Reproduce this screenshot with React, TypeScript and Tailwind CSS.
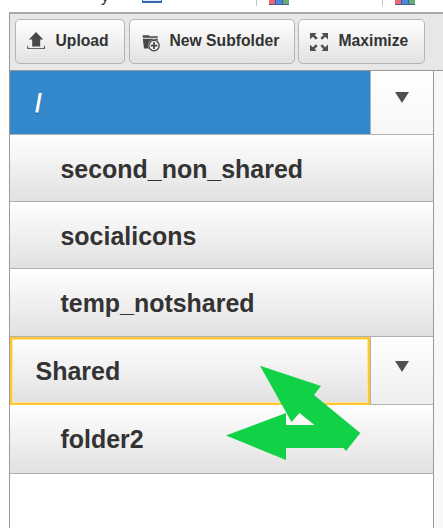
import type { ReactNode } from "react";

const rowBg = "bg-gradient-to-b from-white to-[#e1e1e1]";

function UploadIcon() {
  return (
    <svg width="20" height="20" viewBox="0 0 20 20" className="-mt-px shrink-0">
      <path d="M10 1 17.3 8.6H14.2V15.5H6.2V8.6H2.9Z" fill="#484848" />
      <path d="M1.7 14.8v2.7h16.8v-2.7" fill="none" stroke="#666" strokeWidth="1.1" />
    </svg>
  );
}

function NewFolderIcon() {
  return (
    <svg width="20" height="20" viewBox="0 0 20 20" className="shrink-0">
      <path d="M2.8 3.2h6l1 1h8v1.6h-15ZM2.8 6.8h15v9.7H4Z" fill="#484848" />
      <circle cx="14" cy="13.6" r="6" fill="#f1f1f1" />
      <circle cx="14" cy="13.6" r="5.2" fill="#f1f1f1" stroke="#484848" strokeWidth="1.3" />
      <path d="M14 10.3v6.6M10.7 13.6h6.6" stroke="#484848" strokeWidth="1.8" />
    </svg>
  );
}

function MaximizeIcon() {
  return (
    <svg width="20" height="20" viewBox="0 0 20 20" className="shrink-0" fill="#505050">
      <path d="M1 1h6.6L5.7 3l3 3-1.8 1.8-3.1-3L1 7.5Z" />
      <path d="M19 1v6.5L16.2 4.8l-3 3L11.4 6l3-3L12.5 1Z" />
      <path d="M1 19v-6.5l2.8 2.7 3.1-3L8.7 14l-3 3 1.9 2Z" />
      <path d="M19 19h-6.5l1.9-2-3-3 1.8-1.8 3 3 2.8-2.7Z" />
    </svg>
  );
}

function ChartIcon() {
  return (
    <div className="flex h-[5px] w-5 border-b border-[#45608f]">
      <div className="w-[6px] bg-[#f0666c]" />
      <div className="w-[8px] border-x border-[#3558b8] bg-[#4a86e0]" />
      <div className="w-[6px] bg-[#64ae70]" />
    </div>
  );
}

function ToolButton({ icon, label, className }: { icon: ReactNode; label: string; className: string }) {
  return (
    <button
      className={`flex h-[45px] shrink-0 items-center rounded-[5px] border border-[#b5b5b5] bg-gradient-to-b from-white to-[#e2e2e2] pl-[10px] ${className}`}
    >
      {icon}
      <span className="-mt-px ml-[9.5px] whitespace-nowrap text-[15.7px] leading-5 font-bold">{label}</span>
    </button>
  );
}

function Row({ name, className }: { name: string; className: string }) {
  return (
    <div className={`flex items-center border-b border-[#b0b0b0] pl-[50.5px] pt-[2px] text-[24.95px] font-bold ${rowBg} ${className}`}>
      <span className="leading-7">{name}</span>
    </div>
  );
}

function Toggle({ className }: { className: string }) {
  return (
    <button className={`flex w-[63px] justify-center border-l border-b border-[#b0b0b0] bg-gradient-to-b from-white ${className}`}>
      <svg width="14" height="11" viewBox="0 0 14 11">
        <path d="M0 0h14L7 11Z" fill="#505050" />
      </svg>
    </button>
  );
}

function Arrows() {
  return (
    <svg className="pointer-events-none absolute left-[226px] top-[365px]" width="136" height="96" viewBox="226 365 136 96">
      <path
        fill="#11d246"
        d="M260 365.7 321 386 314 395 360.3 433 346 451 343.5 448H286V460L226 435.5 286 413V425H314.5L299.5 413 291.5 422Z"
      />
    </svg>
  );
}

export default function App() {
  return (
    <div className="relative flex h-[528px] w-[443px] flex-col overflow-hidden bg-white font-['Liberation_Sans',Arial,sans-serif] text-[#333]">
      <div className="flex h-3 shrink-0 items-start pl-[101px] text-[16px]">
        <span className="-mt-[11px] w-[41px] leading-4">y</span>
        <div className="h-[3px] w-5 border-x border-b-2 border-[#3c67b0] bg-[#dceafa]" />
        <div className="ml-[94px] h-[6px] w-px bg-[#c4c4c4]" />
        <div className="ml-3">
          <ChartIcon />
        </div>
        <div className="ml-[93px] h-[6px] w-px bg-[#c4c4c4]" />
        <div className="ml-3">
          <ChartIcon />
        </div>
      </div>

      <div className="ml-[9px] flex min-h-0 grow flex-col border-l border-[#999]">
        <div className="flex h-[59px] shrink-0 border-t-2 border-b border-t-[#aaa] border-b-[#999] bg-[#e7e7e7] pl-[5px] pt-[5px]">
          <ToolButton icon={<UploadIcon />} label="Upload" className="w-[110px]" />
          <ToolButton icon={<NewFolderIcon />} label="New Subfolder" className="ml-1 w-[166px]" />
          <ToolButton icon={<MaximizeIcon />} label="Maximize" className="ml-[3px] w-[127px]" />
        </div>

        <div className="flex grow">
          <div className="flex w-[424px] flex-col border-r border-[#999] bg-white">
            <div className="flex h-16">
              <div className="flex w-[360px] items-center border-b border-[#b0b0b0] bg-[#3388cc] pl-[25px] text-[25px] font-bold text-white [text-shadow:0_1px_0_#194b7e]">
                <span className="leading-7">/</span>
              </div>
              <Toggle className="to-[#f7f7f7] pt-[21px]" />
            </div>
            <Row name="second_non_shared" className="h-[67px]" />
            <Row name="socialicons" className="h-[67px]" />
            <Row name="temp_notshared" className="h-[68px] pb-px" />
            <div className="flex h-[68px]">
              <div className={`flex w-[360px] items-center border-2 border-[#ffc832] pl-[23.5px] text-[25px] font-bold shadow-[inset_0_0_0_1px_#ffe596] ${rowBg}`}>
                <span className="-mt-px leading-7">Shared</span>
              </div>
              <Toggle className="to-[#efefef] pt-6" />
            </div>
            <Row name="folder2" className="h-[69px] pb-[2px]" />
          </div>
          <div className="grow bg-[#f8f8f8]" />
        </div>
      </div>

      <Arrows />
    </div>
  );
}
